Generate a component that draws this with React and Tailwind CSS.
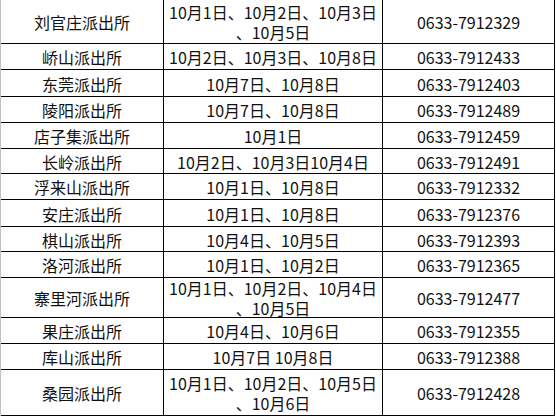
import React from "react";

const rows = [
  { name: "刘官庄派出所", date: ["10月1日、10月2日、10月3日", "、10月5日"], tel: "0633-7912329", h: "h-[44px]" },
  { name: "峤山派出所", date: ["10月2日、10月3日、10月8日"], tel: "0633-7912433", h: "h-[26px]" },
  { name: "东莞派出所", date: ["10月7日、10月8日"], tel: "0633-7912403", h: "h-[27px]" },
  { name: "陵阳派出所", date: ["10月7日、10月8日"], tel: "0633-7912489", h: "h-[26px]" },
  { name: "店子集派出所", date: ["10月1日"], tel: "0633-7912459", h: "h-[26px]" },
  { name: "长岭派出所", date: ["10月2日、10月3日10月4日"], tel: "0633-7912491", h: "h-[25px]" },
  { name: "浮来山派出所", date: ["10月1日、10月8日"], tel: "0633-7912332", h: "h-[26px]" },
  { name: "安庄派出所", date: ["10月1日、10月8日"], tel: "0633-7912376", h: "h-[27px]" },
  { name: "棋山派出所", date: ["10月4日、10月5日"], tel: "0633-7912393", h: "h-[25px]" },
  { name: "洛河派出所", date: ["10月1日、10月2日"], tel: "0633-7912365", h: "h-[26px]" },
  { name: "寨里河派出所", date: ["10月1日、10月2日、10月4日", "、10月5日"], tel: "0633-7912477", h: "h-[40px]" },
  { name: "果庄派出所", date: ["10月4日、10月6日"], tel: "0633-7912355", h: "h-[26px]" },
  { name: "库山派出所", date: ["10月7日 10月8日"], tel: "0633-7912388", h: "h-[26px]" },
  { name: "桑园派出所", date: ["10月1日、10月2日、10月5日", "、10月6日"], tel: "0633-7912428", h: "h-[46px]" },
];

export default function App() {
  return (
    <div className="w-[556px] h-[418px] bg-white overflow-hidden font-['Noto_Sans_CJK_SC','Noto_Sans_CJK_JP',sans-serif] text-[16px] text-[#111]">
      <div className="w-[555px] border-l border-[#c0c0c0]">
        {rows.map((r, i) => (
          <div key={i} className={`flex border-b border-black ${r.h}`}>
            <div className="w-[163px] border-r border-black flex items-center justify-center whitespace-nowrap leading-[20px] pt-[1px]">
              {r.name}
            </div>
            <div className="w-[219px] border-r border-black flex flex-col items-center justify-center whitespace-nowrap leading-[20px] pt-[1px]">
              {r.date.map((d, j) => (
                <span key={j}>{d}</span>
              ))}
            </div>
            <div className="w-[172px] border-r border-black flex items-center justify-center whitespace-nowrap leading-[20px] pt-[1px]">
              {r.tel}
            </div>
          </div>
        ))}
      </div>
    </div>
  );
}
